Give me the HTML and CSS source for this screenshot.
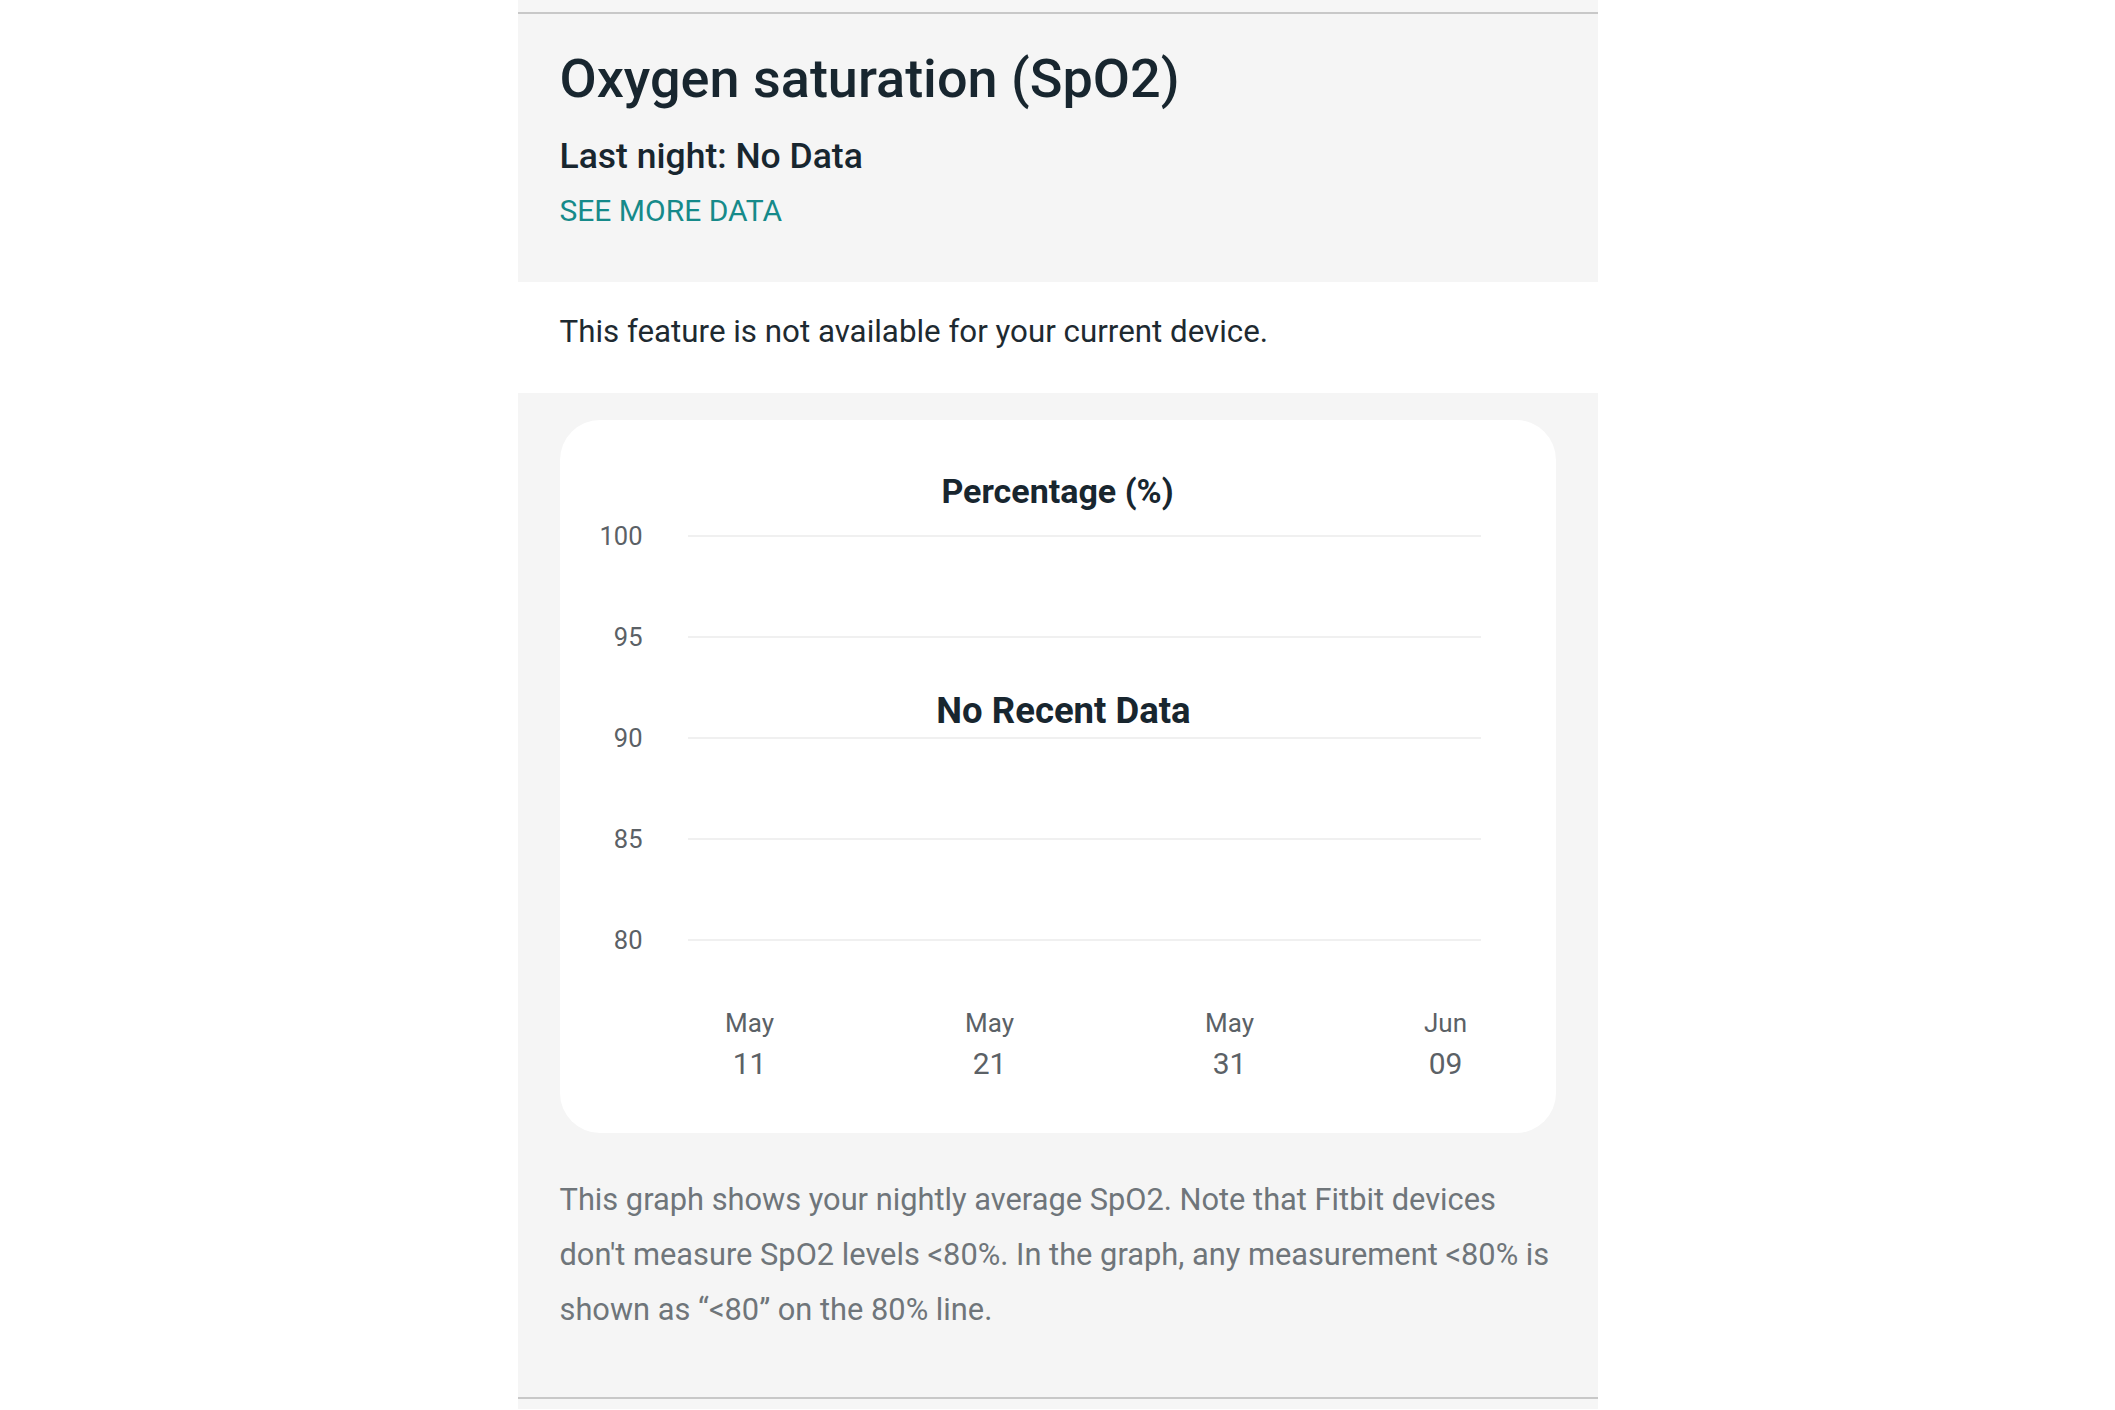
FILE: index.html
```html
<!DOCTYPE html>
<html lang="en">
<head>
<meta charset="utf-8">
<title>Oxygen saturation (SpO2)</title>
<link rel="stylesheet" href="styles.css">
</head>
<body>
<main class="panel">
  <div class="strip strip-top"></div>
  <section class="header">
    <h1 class="title">Oxygen saturation (SpO2)</h1>
    <p class="last-night">Last night: No Data</p>
    <a class="more-link" href="#">SEE MORE DATA</a>
  </section>
  <section class="notice">
    <p class="notice-text">This feature is not available for your current device.</p>
  </section>
  <section class="chart-section">
    <div class="card">
      <div class="chart-title">Percentage (%)</div>
      <div class="plot">
        <div class="tick"><span class="tick-label">100</span><span class="grid-line"></span></div>
        <div class="tick"><span class="tick-label">95</span><span class="grid-line"></span></div>
        <div class="tick"><span class="tick-label">90</span><span class="grid-line"></span></div>
        <div class="tick"><span class="tick-label">85</span><span class="grid-line"></span></div>
        <div class="tick"><span class="tick-label">80</span><span class="grid-line"></span></div>
      </div>
      <div class="x-axis">
        <div class="x-track">
          <div class="x-tick" style="left: 62px"><span class="x-month">May</span><span class="x-day">11</span></div>
          <div class="x-tick" style="left: 302px"><span class="x-month">May</span><span class="x-day">21</span></div>
          <div class="x-tick" style="left: 542px"><span class="x-month">May</span><span class="x-day">31</span></div>
          <div class="x-tick" style="left: 758px"><span class="x-month">Jun</span><span class="x-day">09</span></div>
        </div>
      </div>
      <div class="no-data">No Recent Data</div>
    </div>
    <p class="footnote">This graph shows your nightly average SpO2. Note that Fitbit devices don't measure SpO2 levels &lt;80%. In the graph, any measurement &lt;80% is shown as “&lt;80” on the 80% line.</p>
  </section>
  <div class="strip strip-bottom"></div>
</main>
</body>
</html>
```
FILE: styles.css
```css
* {
  box-sizing: border-box;
}

html, body {
  margin: 0;
  padding: 0;
  background: #ffffff;
}

body {
  font-family: Roboto, "Noto Sans", "Liberation Sans", sans-serif;
  color: #18262f;
}

.panel {
  width: 1080px;
  margin: 0 auto;
  display: flex;
  flex-direction: column;
}

.strip {
  background: #f6f6f6;
}

.strip-top {
  height: 14px;
  border-bottom: 2px solid #c8c8c8;
}

.strip-bottom {
  height: 12px;
  border-top: 2px solid #c8c8c8;
}

.header {
  background: #f5f5f5;
  padding: 33px 42px 51px;
  display: flex;
  flex-direction: column;
  align-items: flex-start;
}

.title {
  margin: 0;
  font-size: 54px;
  line-height: 64px;
  font-weight: 500;
  color: #18262f;
}

.last-night {
  margin: 25px 0 0;
  font-size: 35.5px;
  line-height: 40px;
  font-weight: 500;
  color: #18262f;
}

.more-link {
  margin-top: 15px;
  font-size: 30px;
  line-height: 40px;
  font-weight: 400;
  color: #168a8a;
  text-decoration: none;
}

.notice {
  background: #ffffff;
  padding: 30px 42px 41px;
}

.notice-text {
  margin: 0;
  font-size: 31.3px;
  line-height: 40px;
  color: #1e2a31;
}

.chart-section {
  background: #f5f5f5;
  padding: 27px 42px 60px;
  display: flex;
  flex-direction: column;
}

.card {
  position: relative;
  background: #ffffff;
  border-radius: 40px;
  padding: 51px 75px 51px 0;
  display: flex;
  flex-direction: column;
}

.chart-title {
  font-size: 34px;
  line-height: 40px;
  font-weight: 700;
  text-align: center;
  padding-left: 75px;
  color: #18262f;
}

.plot {
  margin-top: 25px;
  height: 404px;
  display: flex;
  flex-direction: column;
  justify-content: space-between;
}

.tick {
  height: 0;
  display: flex;
  align-items: center;
  gap: 45px;
}

.tick-label {
  width: 83px;
  flex: none;
  text-align: right;
  font-size: 25.5px;
  line-height: 30px;
  color: #5b6166;
}

.grid-line {
  flex: 1;
  height: 2px;
  background: #f0f0f0;
}

.x-axis {
  margin-top: 67px;
  padding-left: 128px;
}

.x-track {
  position: relative;
  height: 75px;
}

.x-tick {
  position: absolute;
  top: 0;
  transform: translateX(-50%);
  display: flex;
  flex-direction: column;
  align-items: center;
  gap: 7px;
  color: #5b6166;
}

.x-month {
  font-size: 26px;
  line-height: 32px;
}

.x-day {
  font-size: 30px;
  line-height: 36px;
}

.no-data {
  position: absolute;
  left: 0;
  right: 0;
  top: 269px;
  padding-left: 12px;
  text-align: center;
  font-size: 36.5px;
  line-height: 44px;
  font-weight: 700;
  color: #18262f;
}

.footnote {
  margin: 39px 0 0;
  font-size: 30.8px;
  line-height: 55px;
  color: #6f757a;
}
```
